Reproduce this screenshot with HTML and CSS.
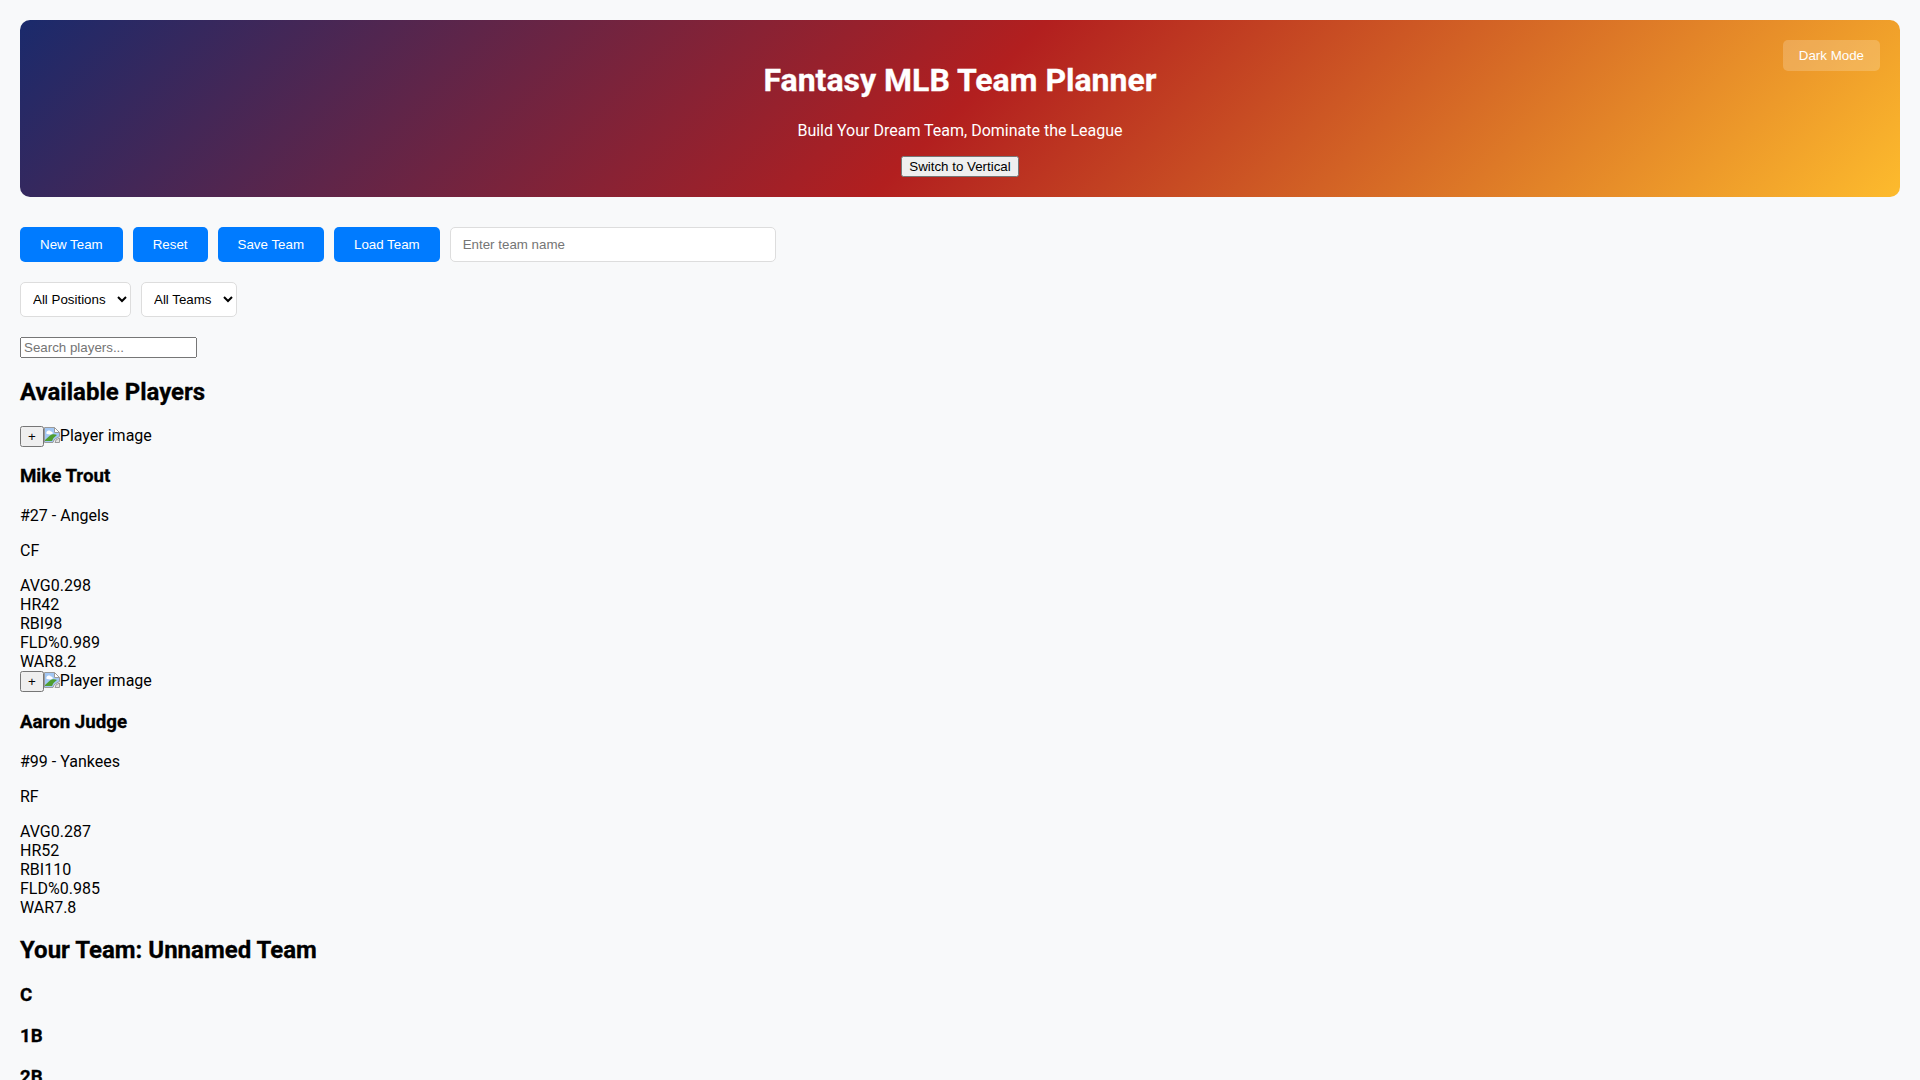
FILE: index.html
```html
<!DOCTYPE html>
<html lang="en">
<head>
<meta charset="utf-8">
<title>Fantasy MLB Team Planner</title>
<link rel="stylesheet" href="styles.css">
</head>
<body>
<svg class="defs" width="0" height="0">
  <symbol id="broken" viewBox="0 0 16 16">
    <path d="M.5.5h10l5 5v4l-3.500 2-2 1.500-1 2.500H.5z" fill="#a3c8f5" stroke="#9a9a9a"/>
    <path d="M2.500 5.500c0-1.500 1.500-2 2.500-2 1 0 1.500.5 2 1 1.500 0 2 1 1.500 2.500-.5.500-4 .5-5.500 0-1-.5-1-1.500-.5-1.500z" fill="#fff"/>
    <path d="M1 14v-1l5-4.500c2-1.500 5-1.500 7-.5l-3.500 3-1.500 3z" fill="#4f9e2f"/>
    <path d="M10.500.5v5h5z" fill="#fff" stroke="#9a9a9a"/>
    <path d="M15.500 11v4.500h-4.500l1-2.500z" fill="#e4e4e4" stroke="#9a9a9a"/>
  </symbol>
</svg>
<header class="hero">
  <button class="theme-toggle">Dark Mode</button>
  <h1>Fantasy MLB Team Planner</h1>
  <p>Build Your Dream Team, Dominate the League</p>
  <button class="layout-toggle">Switch to Vertical</button>
</header>
<div class="controls">
  <button class="action">New Team</button>
  <button class="action">Reset</button>
  <button class="action">Save Team</button>
  <button class="action">Load Team</button>
  <input class="team-name" type="text" placeholder="Enter team name">
</div>
<div class="filters">
  <select class="filter"><option>All Positions</option></select>
  <select class="filter"><option>All Teams</option></select>
</div>
<input class="search" type="text" placeholder="Search players...">
<h2>Available Players</h2>
<div class="player">
  <button class="add">+</button><span class="broken"><svg class="broken-icon" width="16" height="16"><use href="#broken"/></svg>Player image</span>
  <h3>Mike Trout</h3>
  <p>#27 - Angels</p>
  <p>CF</p>
  <div class="stats">
    <div>AVG0.298</div>
    <div>HR42</div>
    <div>RBI98</div>
    <div>FLD%0.989</div>
    <div>WAR8.2</div>
  </div>
</div>
<div class="player">
  <button class="add">+</button><span class="broken"><svg class="broken-icon" width="16" height="16"><use href="#broken"/></svg>Player image</span>
  <h3>Aaron Judge</h3>
  <p>#99 - Yankees</p>
  <p>RF</p>
  <div class="stats">
    <div>AVG0.287</div>
    <div>HR52</div>
    <div>RBI110</div>
    <div>FLD%0.985</div>
    <div>WAR7.8</div>
  </div>
</div>
<h2>Your Team: Unnamed Team</h2>
<h3>C</h3>
<h3>1B</h3>
<h3>2B</h3>
</body>
</html>
```
FILE: styles.css
```css
html, body { margin: 0; }
body {
  padding: 20px;
  background: #f8f9fa;
  color: #000;
  font-family: Roboto, sans-serif;
  font-size: 16px;
}
.defs { position: absolute; }
.hero {
  position: relative;
  padding: 20px;
  border-radius: 10px;
  background: linear-gradient(135deg, #1a2a6c, #b21f1f, #fdbb2d);
  color: #fff;
  text-align: center;
}
.hero h1 { margin: 21.44px 0; font-size: 32px; }
.hero p { margin: 16px 0; }
.theme-toggle {
  position: absolute;
  top: 20px;
  right: 20px;
  padding: 8px 16px;
  border: 0;
  border-radius: 5px;
  background: rgba(255, 255, 255, .2);
  color: #fff;
  font: 13.333px "Liberation Sans", sans-serif;
}
.layout-toggle { font: 13.333px "Liberation Sans", sans-serif; }
.controls { display: flex; gap: 10px; margin-top: 30px; }
.action {
  padding: 10px 20px;
  border: 0;
  border-radius: 5px;
  background: #007bff;
  color: #fff;
  font: 13.333px "Liberation Sans", sans-serif;
}
.team-name, .filter {
  border: 1px solid #ddd;
  border-radius: 5px;
  background: #fff;
  font: 13.333px "Liberation Sans", sans-serif;
}
.team-name { width: 300px; padding: 9px 12px; }
.filter { padding: 8px; }
.filters { display: flex; gap: 10px; margin-top: 20px; }
.search { display: block; margin-top: 20px; width: 169px; font: 13.333px "Liberation Sans", sans-serif; }
h1, h2, h3 { -webkit-text-stroke: .3px currentColor; }
h2 { margin: 19.92px 0; font-size: 24px; }
h3 { margin: 18.72px 0; font-size: 18.72px; }
p { margin: 16px 0; }
.add { font: 13.333px "Liberation Sans", sans-serif; }
.broken-icon { vertical-align: -2px; }
```
